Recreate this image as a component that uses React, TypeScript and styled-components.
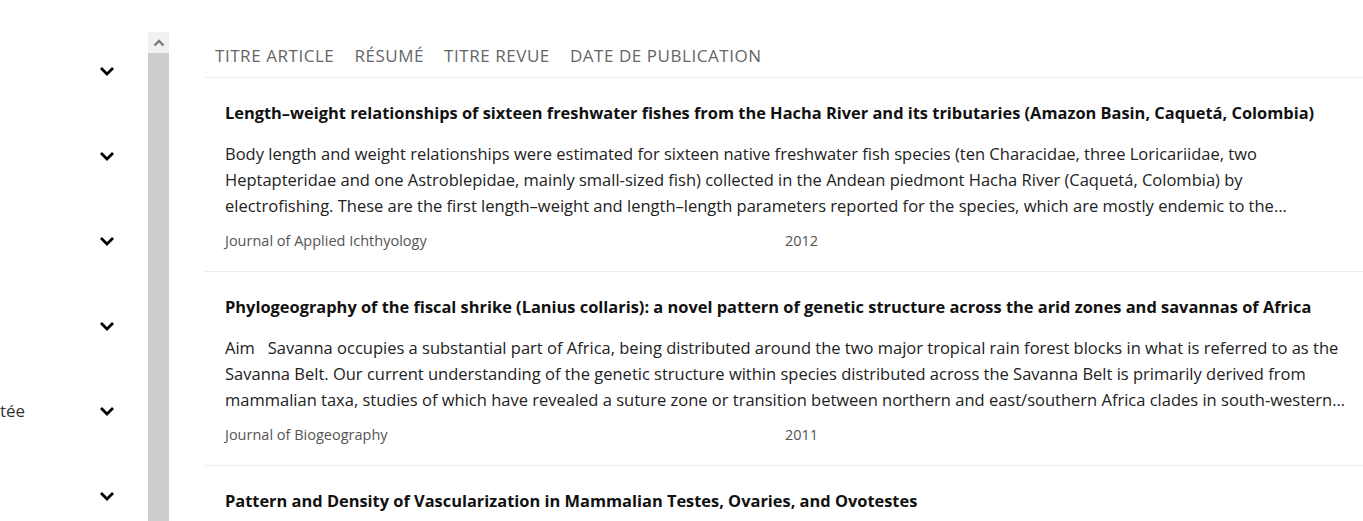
import styled, { createGlobalStyle } from "styled-components";

const GlobalStyle = createGlobalStyle`
  html, body {
    margin: 0;
    padding: 0;
    background: #ffffff;
    overflow: hidden;
  }
  body {
    font-family: "Open Sans", "Noto Sans", sans-serif;
  }
`;

const filters = ["", "", "", "", "tée", ""];

const articles = [
  {
    title:
      "Length–weight relationships of sixteen freshwater fishes from the Hacha River and its tributaries (Amazon Basin, Caquetá, Colombia)",
    summary:
      "Body length and weight relationships were estimated for sixteen native freshwater fish species (ten Characidae, three Loricariidae, two Heptapteridae and one Astroblepidae, mainly small-sized fish) collected in the Andean piedmont Hacha River (Caquetá, Colombia) by electrofishing. These are the first length–weight and length–length parameters reported for the species, which are mostly endemic to the…",
    journal: "Journal of Applied Ichthyology",
    year: "2012",
  },
  {
    title:
      "Phylogeography of the fiscal shrike (Lanius collaris): a novel pattern of genetic structure across the arid zones and savannas of Africa",
    summary:
      "Aim   Savanna occupies a substantial part of Africa, being distributed around the two major tropical rain forest blocks in what is referred to as the Savanna Belt. Our current understanding of the genetic structure within species distributed across the Savanna Belt is primarily derived from mammalian taxa, studies of which have revealed a suture zone or transition between northern and east/southern Africa clades in south\u2011western…",
    journal: "Journal of Biogeography",
    year: "2011",
  },
  {
    title:
      "Pattern and Density of Vascularization in Mammalian Testes, Ovaries, and Ovotestes",
    summary:
      "The vascular architecture of gonads was compared across several mammalian species using corrosion casts and histological sections.",
    journal: "Journal of Experimental Zoology",
    year: "2009",
  },
];

const Chevron = () => (
  <svg width="16" height="10" viewBox="0 0 16 10">
    <path d="M2 2 L8 8 L14 2" fill="none" stroke="#000" strokeWidth="2.8" />
  </svg>
);

const App = () => {
  return (
    <Page>
      <GlobalStyle />
      <Side>
        <FilterList>
          {filters.map((f, i) => (
            <FilterRow key={i}>
              <FilterLabel>{f}</FilterLabel>
              <Chevron />
            </FilterRow>
          ))}
        </FilterList>
        <ScrollBar>
          <ScrollArrow>
            <svg width="12" height="8" viewBox="0 0 12 8">
              <path d="M1.5 6.5 L6 2 L10.5 6.5" fill="none" stroke="#7d7d7d" strokeWidth="2.4" />
            </svg>
          </ScrollArrow>
          <ScrollThumb />
        </ScrollBar>
      </Side>
      <Main>
        <Tabs>
          <Tab>Titre article</Tab>
          <Tab>Résumé</Tab>
          <Tab>Titre revue</Tab>
          <Tab>Date de publication</Tab>
        </Tabs>
        {articles.map((a, i) => (
          <Article key={i}>
            <Title>{a.title}</Title>
            <Summary>{a.summary}</Summary>
            <Meta>
              <span>{a.journal}</span>
              <span>{a.year}</span>
            </Meta>
          </Article>
        ))}
      </Main>
    </Page>
  );
};
export default App;

const Page = styled.div`
  display: flex;
  height: 521px;
  box-sizing: border-box;
  padding-top: 32px;
  overflow: hidden;
`;

const Side = styled.div`
  flex: none;
  width: 169px;
  display: flex;
  overflow: hidden;
`;

const FilterList = styled.div`
  width: 148px;
  margin-top: -4px;
  display: flex;
  flex-direction: column;
`;

const FilterRow = styled.div`
  flex: none;
  height: 85px;
  display: flex;
  align-items: center;
  justify-content: space-between;
  padding-right: 33px;
`;

const FilterLabel = styled.span`
  color: #333333;
  font-size: 17px;
  font-weight: 400;
`;

const ScrollBar = styled.div`
  width: 21px;
  display: flex;
  flex-direction: column;
`;

const ScrollArrow = styled.div`
  height: 21px;
  background: #f1f1f1;
  display: flex;
  align-items: center;
  justify-content: center;
`;

const ScrollThumb = styled.div`
  flex: 1;
  background: #cdcdcd;
`;

const Main = styled.div`
  flex: 1;
  margin-left: 36px;
  min-width: 0;
`;

const Tabs = styled.div`
  height: 46px;
  box-sizing: border-box;
  display: flex;
  align-items: center;
  gap: 20px;
  padding: 2px 0 0 10px;
  border-bottom: 1px solid #ececec;
`;

const Tab = styled.span`
  text-transform: uppercase;
  color: #666666;
  font-size: 17px;
  font-weight: 400;
  letter-spacing: 0.55px;
`;

const Article = styled.div`
  padding: 24px 18px 20px 20px;
  border-bottom: 1px solid #ececec;
`;

const Title = styled.div`
  color: #111111;
  font-size: 16.4px;
  font-weight: 700;
  line-height: 22px;
`;

const Summary = styled.div`
  margin-top: 17px;
  color: #222222;
  font-size: 16.5px;
  line-height: 26px;
  display: -webkit-box;
  -webkit-line-clamp: 3;
  -webkit-box-orient: vertical;
  overflow: hidden;
  white-space: pre-wrap;
`;

const Meta = styled.div`
  margin-top: 12px;
  display: grid;
  grid-template-columns: 1fr 1fr;
  color: #555555;
  font-size: 14.5px;
  line-height: 20px;
`;
